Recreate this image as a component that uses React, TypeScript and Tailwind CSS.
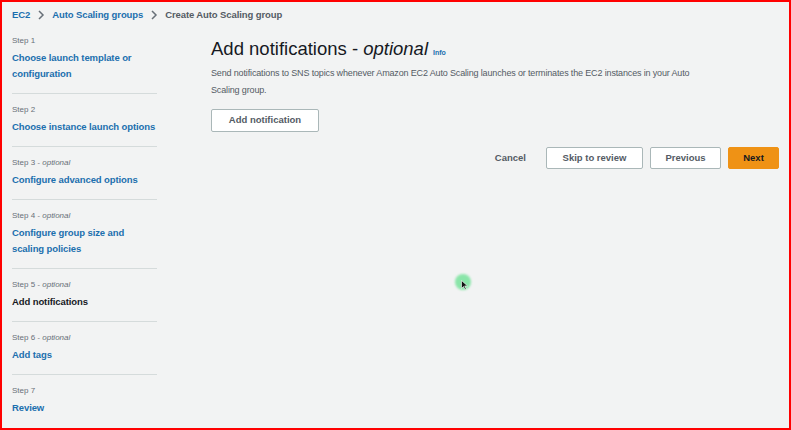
import React from "react";

const steps = [
  { label: "Step 1", title: ["Choose launch template or", "configuration"] },
  { label: "Step 2", title: ["Choose instance launch options"] },
  { label: "Step 3", optional: true, title: ["Configure advanced options"] },
  { label: "Step 4", optional: true, title: ["Configure group size and", "scaling policies"] },
  { label: "Step 5", optional: true, title: ["Add notifications"], current: true },
  { label: "Step 6", optional: true, title: ["Add tags"] },
  { label: "Step 7", title: ["Review"] },
];

const Chevron = () => (
  <svg width="8" height="10" viewBox="0 0 8 10" className="mx-[7px]">
    <path d="M2 1l4 4-4 4" fill="none" stroke="#687078" strokeWidth="1.5" />
  </svg>
);

export default function App() {
  return (
    <div
      className="w-[791px] h-[430px] overflow-hidden bg-[#f2f3f3] border-2 border-[#ff0000] relative"
      style={{ fontFamily: '"Liberation Sans", Arial, sans-serif' }}
    >
      {/* Breadcrumb */}
      <div className="flex items-center h-[24px] pl-[10px] mt-[1px] text-[9.5px] font-bold tracking-[-0.1px]">
        <span className="text-[#1b6fae]">EC2</span>
        <Chevron />
        <span className="text-[#1b6fae]">Auto Scaling groups</span>
        <Chevron />
        <span className="text-[#545b64]">Create Auto Scaling group</span>
      </div>

      <div className="flex">
        {/* Steps sidebar */}
        <nav className="w-[145px] ml-[10px] pt-[8px] shrink-0">
          {steps.map((s, i) => (
            <div key={s.label}>
              <div className="text-[8px] text-[#687078] leading-[12px]">
                {s.label}
                {s.optional && <span className="italic"> - optional</span>}
              </div>
              <div
                className={`mt-[3px] text-[9.5px] font-bold leading-[16px] tracking-[-0.1px] whitespace-nowrap ${
                  s.current ? "text-[#16191f]" : "text-[#1b6fae]"
                }`}
              >
                {s.title.map((t) => (
                  <div key={t}>{t}</div>
                ))}
              </div>
              {i < steps.length - 1 && <div className="h-px bg-[#d5dbdb] mt-[11px] mb-[10px]" />}
            </div>
          ))}
        </nav>

        {/* Main */}
        <main className="flex-1 pl-[54px] pr-[10px] pt-[10px]">
          <h1 className="flex items-baseline text-[18.5px] text-[#16191f] leading-[24px]">
            <span>
              Add notifications - <span className="italic">optional</span>
            </span>
            <span className="ml-[5px] text-[7px] font-bold text-[#1b6fae]">Info</span>
          </h1>
          <p className="mt-0 text-[9px] leading-[17px] text-[#545b64] w-[492px] tracking-[-0.15px]">
            Send notifications to SNS topics whenever Amazon EC2 Auto Scaling launches or terminates the EC2 instances in your Auto Scaling group.
          </p>
          <button className="mt-[10px] h-[23px] w-[108px] bg-white border border-[#aab7b8] rounded-[2px] text-[9.5px] font-bold text-[#545b64]">
            Add notification
          </button>

          <div className="flex items-center justify-end gap-[7px] mt-[15px]">
            <span className="text-[9.5px] font-bold text-[#545b64] mr-[13px]">Cancel</span>
            <button className="h-[22px] w-[97px] bg-white border border-[#aab7b8] rounded-[2px] text-[9.5px] font-bold text-[#545b64]">
              Skip to review
            </button>
            <button className="h-[22px] w-[71px] bg-white border border-[#aab7b8] rounded-[2px] text-[9.5px] font-bold text-[#545b64]">
              Previous
            </button>
            <button className="h-[22px] w-[51px] bg-[#ef9215] border border-[#ef9215] rounded-[2px] text-[9.5px] font-bold text-[#16191f]">
              Next
            </button>
          </div>
        </main>
      </div>

      {/* Cursor highlight */}
      <div className="absolute left-[453px] top-[272px] w-[16px] h-[16px] rounded-full bg-[#5fe08a] opacity-70 blur-[1px]" />
      <svg className="absolute left-[459px] top-[278px]" width="7" height="10" viewBox="0 0 7 10">
        <path d="M0.5 0.5v8l2-2 1.5 3 1.2-0.6-1.5-3h2.8z" fill="#111" stroke="#fff" strokeWidth="0.6" />
      </svg>
    </div>
  );
}
